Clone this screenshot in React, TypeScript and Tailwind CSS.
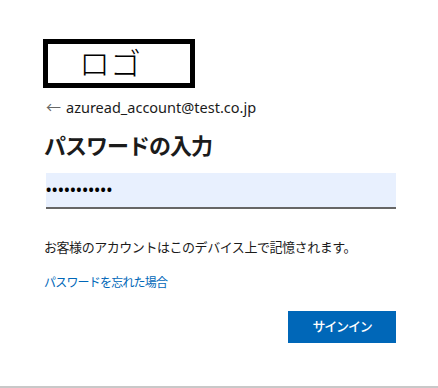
import React from 'react';

const jp = { fontFamily: '"Segoe UI", "Noto Sans", "Noto Sans CJK JP", sans-serif' };

const App: React.FC = () => {
  return (
    <div className="w-[438px] h-[388px] bg-white flex flex-col text-[#1b1b1b]" style={jp}>
      <div className="flex-1 pl-[44px] pr-[42px] pt-[39px]">
        <div className="ml-[-1px] w-[152px] h-[49px] border-[5px] border-black flex items-center pl-[31px]">
          <span className="text-[31px] leading-none text-black font-light">ロゴ</span>
        </div>

        <div className="mt-[9px] flex items-center gap-[5px] text-[14.5px] leading-[20px] text-[#1b1b1b]">
          <span className="text-[#666] text-[15px] ml-[2px]">←</span>
          <span>azuread_account@test.co.jp</span>
        </div>

        <h1 className="mt-[13px] text-[22px] tracking-[-1px] leading-[30px] font-semibold text-[#1b1b1b]">パスワードの入力</h1>

        <div className="mt-[13px] ml-[2px] h-[36px] bg-[#e8f0fe] border-b-2 border-[#666] flex items-center">
          <span className="text-[14px] tracking-[0.8px] text-black font-bold leading-none">•••••••••••</span>
        </div>

        <p className="mt-[28px] text-[13px] tracking-[-0.45px] leading-[20px]">お客様のアカウントはこのデバイス上で記憶されます。</p>

        <a className="block mt-[17px] text-[12px] tracking-[-0.8px] leading-[18px] text-[#0067b8]">パスワードを忘れた場合</a>

        <div className="mt-[19px] flex justify-end">
          <button className="w-[108px] h-[32px] bg-[#0067b8] text-white text-[13px] tracking-[-1.2px] font-medium">サインイン</button>
        </div>
      </div>
      <div className="h-[2px] bg-[#c8c8c8]" />
    </div>
  );
};

export default App;
